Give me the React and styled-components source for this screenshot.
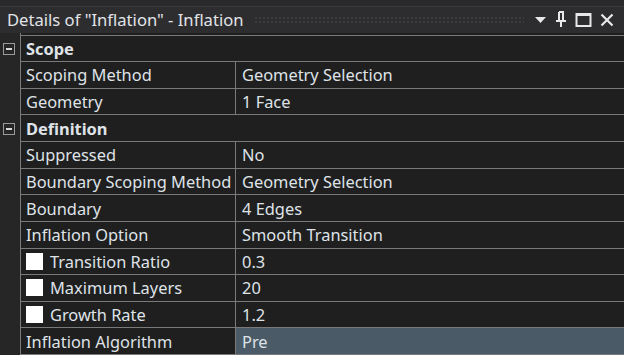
import React from "react";
import styled, { createGlobalStyle } from "styled-components";

const Global = createGlobalStyle`
  html, body {
    margin: 0;
    padding: 0;
    background: #1f1f1f;
  }
  body {
    font-family: "Noto Sans", "Open Sans", sans-serif;
  }
`;

const Panel = styled.div`
  width: 624px;
  height: 355px;
  overflow: hidden;
  background: #1f1f1f;
  display: flex;
  flex-direction: column;
`;

const TopStrip = styled.div`
  height: 7px;
  background: #2a2a2c;
  border-bottom: 1px solid #3a3a3c;
`;

const TitleBar = styled.div`
  height: 27px;
  display: flex;
  align-items: center;
  padding: 0 10px 0 7px;
  gap: 10px;
  background: #2d2d30;
`;

const Title = styled.div`
  font-size: 16.6px;
  color: #e2e4e8;
  white-space: nowrap;
`;

const Grip = styled.div`
  flex: 1;
  height: 8px;
  background-image: radial-gradient(#3c3c40 0.8px, transparent 0.9px);
  background-size: 4px 4px;
`;

const Tools = styled.div`
  display: flex;
  align-items: center;
  gap: 8px;
  color: #e8e8e8;
`;

const Body = styled.div`
  flex: 1;
  display: flex;
  background: #1f1f1f;
`;

const Gutter = styled.div`
  width: 20px;
  padding-top: 3px;
  background: #262626;
  border-right: 1px solid #7a7a7a;
  display: flex;
  flex-direction: column;
`;

const GutterCell = styled.div`
  height: 26.64px;
  display: flex;
  align-items: center;
  justify-content: center;
  padding-right: 3px;
`;

const Toggle = styled.div`
  width: 10px;
  height: 10px;
  border: 1px solid #9a9a9a;
  position: relative;
  &::after {
    content: "";
    position: absolute;
    left: 2px;
    right: 2px;
    top: 4px;
    height: 2px;
    background: #d8d8d8;
  }
`;

const Grid = styled.div`
  flex: 1;
  margin-top: 2px;
  border-top: 1px solid #7a7a7a;
  display: flex;
  flex-direction: column;
`;

const Row = styled.div`
  height: 26.64px;
  box-sizing: border-box;
  border-bottom: 1px solid #7a7a7a;
  display: flex;
  flex-shrink: 0;
`;

const Label = styled.div`
  width: 215px;
  box-sizing: border-box;
  border-right: ${({ $header }) => ($header ? "none" : "1px solid #7a7a7a")};
  display: flex;
  align-items: center;
  gap: 7px;
  padding-left: 5px;
  font-size: 16.4px;
  font-weight: ${({ $header }) => ($header ? 700 : 400)};
  color: #dfe3e8;
  white-space: nowrap;
`;

const Value = styled.div`
  flex: 1;
  display: flex;
  align-items: center;
  padding-left: 6px;
  font-size: 16.4px;
  color: #dfe3e8;
  background: ${({ $active }) => ($active ? "#4a5a66" : "transparent")};
  white-space: nowrap;
`;

const Check = styled.span`
  width: 17px;
  height: 17px;
  background: #ffffff;
  flex-shrink: 0;
`;

const rows = [
  { header: "Scope" },
  { label: "Scoping Method", value: "Geometry Selection" },
  { label: "Geometry", value: "1 Face" },
  { header: "Definition" },
  { label: "Suppressed", value: "No" },
  { label: "Boundary Scoping Method", value: "Geometry Selection" },
  { label: "Boundary", value: "4 Edges" },
  { label: "Inflation Option", value: "Smooth Transition" },
  { label: "Transition Ratio", value: "0.3", check: true },
  { label: "Maximum Layers", value: "20", check: true },
  { label: "Growth Rate", value: "1.2", check: true },
  { label: "Inflation Algorithm", value: "Pre", active: true },
];

const Icons = () => (
  <Tools>
    <svg width="13" height="8" viewBox="0 0 13 8">
      <path d="M1 1 L12 1 L6.5 7 Z" fill="#e8e8e8" />
    </svg>
    <svg width="12" height="17" viewBox="0 0 12 17">
      <path
        d="M4 1 V10 M4 1 H8 V10 M1 10 H11 M6 10 V16"
        stroke="#e8e8e8"
        strokeWidth="2"
        fill="none"
      />
    </svg>
    <svg width="17" height="16" viewBox="0 0 17 16">
      <rect x="1.5" y="2" width="14" height="12" stroke="#e8e8e8" strokeWidth="2" fill="none" />
      <path d="M1.5 3 H15.5" stroke="#e8e8e8" strokeWidth="2" />
    </svg>
    <svg width="14" height="14" viewBox="0 0 14 14">
      <path d="M1.5 1.5 L12.5 12.5 M12.5 1.5 L1.5 12.5" stroke="#e8e8e8" strokeWidth="2.2" />
    </svg>
  </Tools>
);

const App = () => {
  return (
    <Panel>
      <Global />
      <TopStrip />
      <TitleBar>
        <Title>Details of "Inflation" - Inflation</Title>
        <Grip />
        <Icons />
      </TitleBar>
      <Body>
        <Gutter>
          {rows.map((r, i) => (
            <GutterCell key={i}>{r.header && <Toggle />}</GutterCell>
          ))}
        </Gutter>
        <Grid>
          {rows.map((r, i) =>
            r.header ? (
              <Row key={i}>
                <Label $header>{r.header}</Label>
              </Row>
            ) : (
              <Row key={i}>
                <Label>
                  {r.check && <Check />}
                  {r.label}
                </Label>
                <Value $active={r.active}>{r.value}</Value>
              </Row>
            )
          )}
        </Grid>
      </Body>
    </Panel>
  );
};

export default App;
